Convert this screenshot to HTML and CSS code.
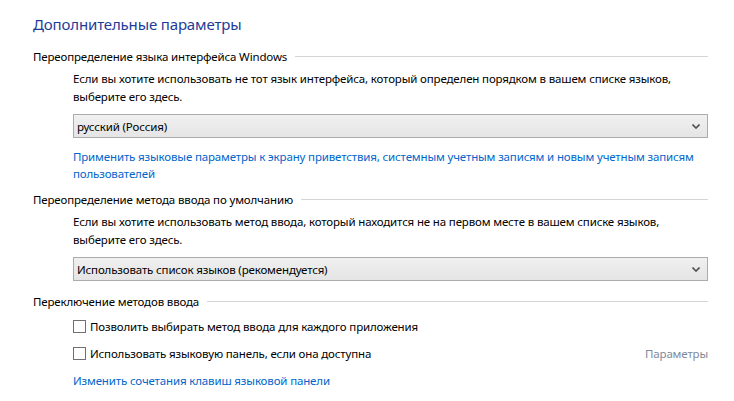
FILE: index.html
```html
<!DOCTYPE html>
<html lang="ru">
<head>
    <meta charset="UTF-8">
    <title>Дополнительные параметры</title>
    <link rel="stylesheet" href="styles.css">
</head>
<body>
    <div class="page">
        <h1 class="title">Дополнительные параметры</h1>

        <div class="group-head"><span>Переопределение языка интерфейса Windows</span><i class="rule"></i></div>
        <div class="indent">
            <p class="desc">Если вы хотите использовать не тот язык интерфейса, который определен порядком в вашем списке языков, выберите его здесь.</p>
            <div class="select"><span>русский (Россия)</span>
                <svg width="8" height="5" viewBox="0 0 8 5"><path d="M0.5 0.5 L4 4 L7.5 0.5" fill="none" stroke="#505050" stroke-width="1.6"/></svg>
            </div>
            <a class="link block" href="#">Применить языковые параметры к экрану приветствия, системным учетным записям и новым учетным записям пользователей</a>
        </div>

        <div class="group-head second"><span>Переопределение метода ввода по умолчанию</span><i class="rule"></i></div>
        <div class="indent">
            <p class="desc">Если вы хотите использовать метод ввода, который находится не на первом месте в вашем списке языков, выберите его здесь.</p>
            <div class="select"><span>Использовать список языков (рекомендуется)</span>
                <svg width="8" height="5" viewBox="0 0 8 5"><path d="M0.5 0.5 L4 4 L7.5 0.5" fill="none" stroke="#505050" stroke-width="1.6"/></svg>
            </div>
        </div>

        <div class="group-head third"><span>Переключение методов ввода</span><i class="rule"></i></div>
        <div class="indent">
            <div class="row"><label class="check"><i class="box"></i>Позволить выбирать метод ввода для каждого приложения</label></div>
            <div class="row"><label class="check"><i class="box"></i>Использовать языковую панель, если она доступна</label><span class="disabled">Параметры</span></div>
            <div class="row"><a class="link" href="#">Изменить сочетания клавиш языковой панели</a></div>
        </div>
    </div>
</body>
</html>
```

FILE: styles.css
```css
body { margin: 0; background: #fff; }
.page { padding: 14px 26px 0 33px; font-family: "Noto Sans", "Open Sans", sans-serif; font-size: 11.5px; letter-spacing: -0.15px; color: #000; }
.title { margin: 0; font-size: 15px; font-weight: normal; line-height: 20px; color: #1e3c96; }

.group-head { display: flex; align-items: center; gap: 8px; margin-top: 14px; line-height: 17px; }
.group-head.second { margin-top: 9px; }
.group-head.third { margin-top: 12px; }
.rule { flex: 1; height: 1px; background: #d5d5d5; }

.indent { padding-left: 40px; }
.desc { margin: 5px 0 0; line-height: 18px; }

.select { display: flex; align-items: center; justify-content: space-between; height: 22px; margin-top: 8px; padding: 0 7px 0 3px; border: 1px solid #acacac; background: linear-gradient(#f0f0f0, #e5e5e5); }

.link { color: #0066cc; text-decoration: none; line-height: 17px; }
.link.block { display: block; margin-top: 10px; }

.row { display: flex; justify-content: space-between; align-items: center; height: 18px; margin-top: 9px; }
.indent .row:first-child { margin-top: 7px; }
.check { display: flex; align-items: center; gap: 4px; }
.box { width: 11px; height: 11px; border: 1px solid #707070; background: #fff; }
.disabled { color: #7f8a99; }
```
